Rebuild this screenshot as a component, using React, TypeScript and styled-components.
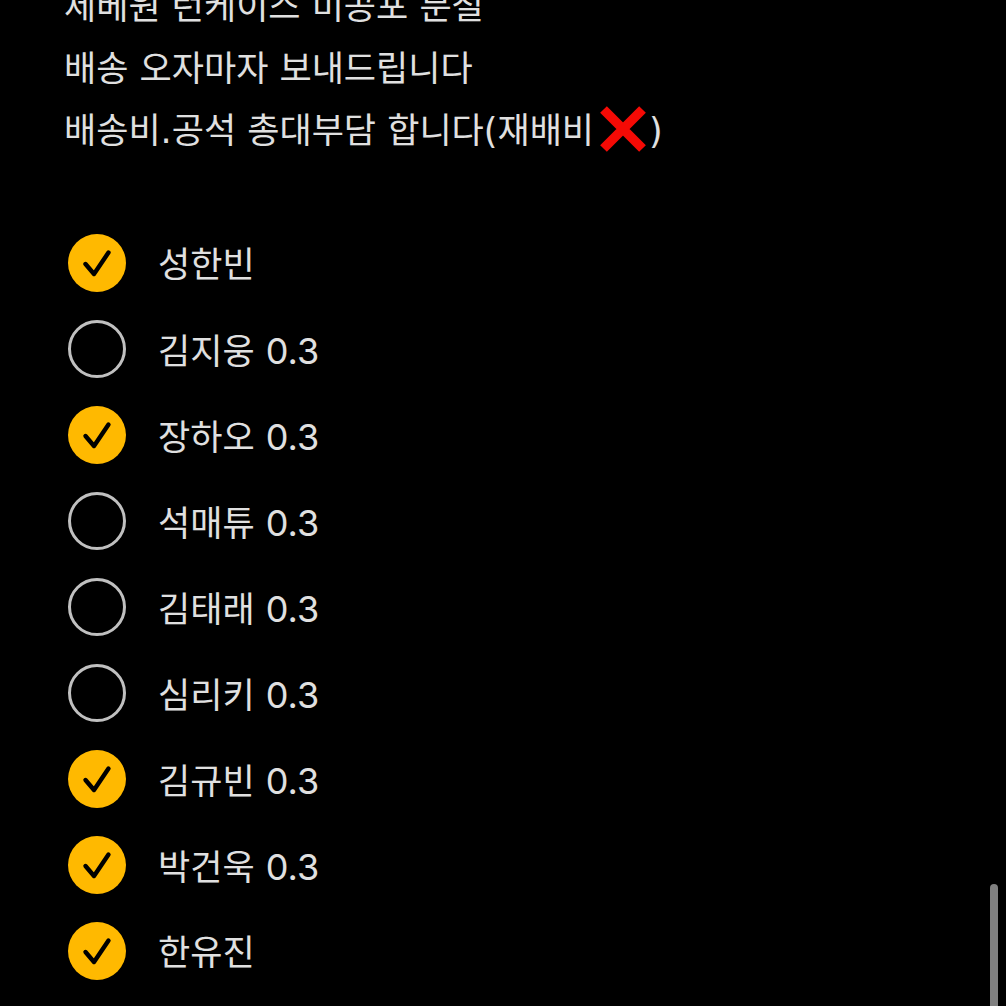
import React from "react";
import styled, { createGlobalStyle } from "styled-components";

const Global = createGlobalStyle`
  * { box-sizing: border-box; }
  body { margin: 0; background: #000; overflow: hidden; }
`;
const Page = styled.main`
  display: flex;
  justify-content: space-between;
  height: 100vh;
  overflow: hidden;
  background: #000;
  color: #e0e0e0;
  font: 400 35px/62px "DejaVu Sans", "Noto Sans CJK KR", sans-serif;
`;
const Note = styled.article`
  flex: 1;
  min-width: 0;
  padding: 0 64px;
  margin-top: -24px;
`;
const Line = styled.p`
  margin: 0;
  height: 62px;
  white-space: nowrap;
`;
const Cross = styled.svg`
  width: 48px;
  height: 48px;
  margin: -8px 2px 0 5px;
  vertical-align: middle;
`;
const List = styled.ul`
  list-style: none;
  margin: 71px 0 0;
  padding: 0 4px;
  display: grid;
  gap: 26px;
`;
const Row = styled.label`
  display: flex;
  align-items: center;
  gap: 32px;
  height: 60px;
`;
const Tick = styled.input`
  appearance: none;
  flex: none;
  width: 58px;
  height: 58px;
  margin: 0;
  border: 3px solid #c0c0c0;
  border-radius: 50%;
  &:checked { border: 0; background: #ffb900; }
`;
const Control = styled.span`
  display: grid;
  > * { grid-area: 1 / 1; }
`;
const Check = styled.svg`
  width: 58px;
  height: 58px;
  pointer-events: none;
  visibility: hidden;
  input:checked + & { visibility: visible; }
`;
const Name = styled.span`
  padding-top: 4px;
`;
const Num = styled.span`
  font-family: Inter, sans-serif;
  font-size: 36px;
`;
const Rail = styled.div`
  display: flex;
  align-items: flex-end;
  padding-right: 8px;
`;
const Thumb = styled.div`
  width: 8px;
  height: 122px;
  border-radius: 4px 4px 0 0;
  background: #808080;
`;

const members = [
  { name: "성한빈", done: true },
  { name: "김지웅", price: "0.3", done: false },
  { name: "장하오", price: "0.3", done: true },
  { name: "석매튜", price: "0.3", done: false },
  { name: "김태래", price: "0.3", done: false },
  { name: "심리키", price: "0.3", done: false },
  { name: "김규빈", price: "0.3", done: true },
  { name: "박건욱", price: "0.3", done: true },
  { name: "한유진", done: true },
];

export default function App() {
  return (
    <Page>
      <Global />
      <Note>
        <Line>제베원 런케이스 미공포 분철</Line>
        <Line>배송 오자마자 보내드립니다</Line>
        <Line>
          배송비.공석 총대부담 합니다(재배비
          <Cross viewBox="0 0 48 48" role="img" aria-label="X">
            <path d="M4.5 4.5L43.5 43.5M43.5 4.5L4.5 43.5" stroke="#f50a05" strokeWidth="9.5" />
          </Cross>
          )
        </Line>
        <List>
          {members.map((m) => (
            <li key={m.name}>
              <Row>
                <Control>
                  <Tick type="checkbox" defaultChecked={m.done} />
                  <Check viewBox="0 0 58 58" aria-hidden="true">
                    <path d="M17.5 30L26 40L40.5 18.5" fill="none" stroke="#000" strokeWidth="4.4" strokeLinecap="round" strokeLinejoin="round" />
                  </Check>
                </Control>
                <Name>
                  {m.name}
                  {m.price && <> <Num>{m.price}</Num></>}
                </Name>
              </Row>
            </li>
          ))}
        </List>
      </Note>
      <Rail aria-hidden="true"><Thumb /></Rail>
    </Page>
  );
}
